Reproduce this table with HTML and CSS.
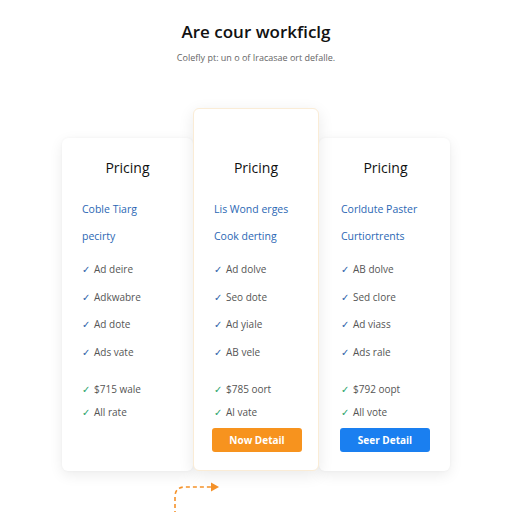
FILE: index.html
```html
<!DOCTYPE html>
<html>
<head>
<meta charset="utf-8">
<link rel="stylesheet" href="styles.css">
</head>
<body>
<header class="hero">
  <h1 class="title">Are cour workficlg</h1>
  <p class="subtitle">Colefly pt: un o of Iracasae ort defalle.</p>
</header>
<main class="plans">
  <section class="card side">
    <h2 class="card-title">Pricing</h2>
    <p class="link">Coble Tiarg</p>
    <p class="link">pecirty</p>
    <ul class="features">
      <li><span class="chk">✓</span>Ad deire</li>
      <li><span class="chk">✓</span>Adkwabre</li>
      <li><span class="chk">✓</span>Ad dote</li>
      <li><span class="chk">✓</span>Ads vate</li>
    </ul>
    <ul class="extras">
      <li><span class="chk green">✓</span>$715 wale</li>
      <li><span class="chk green">✓</span>All rate</li>
    </ul>
  </section>
  <section class="card featured">
    <h2 class="card-title">Pricing</h2>
    <p class="link">Lis Wond erges</p>
    <p class="link">Cook derting</p>
    <ul class="features">
      <li><span class="chk">✓</span>Ad dolve</li>
      <li><span class="chk">✓</span>Seo dote</li>
      <li><span class="chk">✓</span>Ad yiale</li>
      <li><span class="chk">✓</span>AB vele</li>
    </ul>
    <ul class="extras">
      <li><span class="chk green">✓</span>$785 oort</li>
      <li><span class="chk green">✓</span>Al vate</li>
    </ul>
    <button class="btn orange">Now Detail</button>
  </section>
  <section class="card side right">
    <h2 class="card-title">Pricing</h2>
    <p class="link">Corldute Paster</p>
    <p class="link">Curtiortrents</p>
    <ul class="features">
      <li><span class="chk">✓</span>AB dolve</li>
      <li><span class="chk">✓</span>Sed clore</li>
      <li><span class="chk">✓</span>Ad viass</li>
      <li><span class="chk">✓</span>Ads rale</li>
    </ul>
    <ul class="extras">
      <li><span class="chk green">✓</span>$792 oopt</li>
      <li><span class="chk green">✓</span>All vote</li>
    </ul>
    <button class="btn blue">Seer Detail</button>
  </section>
</main>
<svg class="arrow" width="62" height="34" viewBox="0 0 62 34">
  <path d="M17 34 V16 Q17 6 27 6 H54" fill="none" stroke="#f5922a" stroke-width="1.6" stroke-dasharray="4 3"/>
  <path d="M53 1.5 L61 6 L53 10.5 Z" fill="#f5922a"/>
</svg>
</body>
</html>
```
FILE: styles.css
```css
html, body {
  margin: 0;
  padding: 0;
  background: #ffffff;
}
body {
  width: 512px;
  height: 512px;
  overflow: hidden;
  font-family: "Open Sans", "DejaVu Sans", sans-serif;
  color: #1a1a1a;
}
.hero {
  text-align: center;
  padding-top: 22px;
}
.title {
  margin: 0;
  font-size: 17px;
  line-height: 20px;
  font-weight: 600;
  color: #111;
}
.subtitle {
  margin: 10px 0 0;
  font-size: 9px;
  line-height: 12px;
  color: #666;
}
.plans {
  display: flex;
  justify-content: center;
  align-items: stretch;
  margin-top: 44px;
}
.card {
  background: #fff;
  border-radius: 6px;
  box-sizing: border-box;
  padding: 20px 0 18px 20px;
  box-shadow: 0 4px 14px rgba(0, 0, 0, 0.08), 0 0 3px rgba(0, 0, 0, 0.04);
}
.side {
  width: 131px;
  margin-top: 30px;
}
.right {
  padding-left: 22px;
}
.featured {
  width: 126px;
  padding-top: 49px;
  border: 1px solid #faecd6;
  position: relative;
  z-index: 1;
  box-shadow: 0 4px 16px rgba(0, 0, 0, 0.09);
}
.card-title {
  margin: 0;
  padding-right: 20px;
  text-align: center;
  font-size: 14px;
  line-height: 20px;
  font-weight: 500;
  color: #111;
}
.link {
  margin: 0;
  font-size: 10.5px;
  line-height: 27px;
  color: #2b67b4;
}
.link:first-of-type {
  margin-top: 17.5px;
}
.features, .extras {
  list-style: none;
  margin: 0;
  padding: 0;
  font-size: 10px;
  color: #555;
}
.features {
  margin-top: 6.5px;
}
.features li {
  line-height: 27.5px;
}
.extras {
  margin-top: 12px;
}
.extras li {
  line-height: 23px;
}
.chk {
  display: inline-block;
  width: 12px;
  color: #2b5ea8;
  font-size: 10px;
}
.chk.green {
  color: #27a36a;
}
.btn {
  display: block;
  width: 90px;
  height: 24px;
  margin: 3.5px 0 0 -2px;
  border: none;
  border-radius: 3px;
  color: #fff;
  font-family: "Open Sans", sans-serif;
  font-weight: 700;
  font-size: 10px;
  padding: 0;
}
.orange {
  background: #f7931e;
}
.blue {
  background: #1a7ff0;
  margin-left: -1px;
}
.arrow {
  display: block;
  margin: 10px 0 0 158px;
}
```
